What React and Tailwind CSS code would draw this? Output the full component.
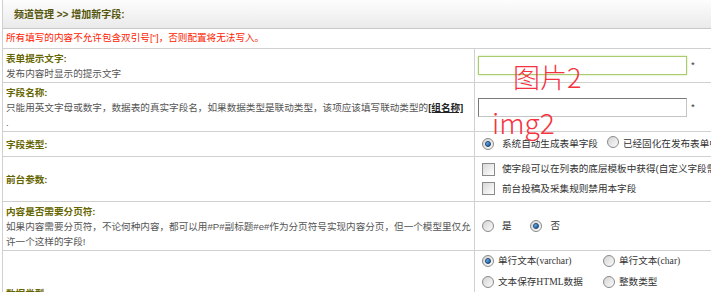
const font = { fontFamily: '"Liberation Sans", "Noto Sans CJK SC", sans-serif' }

function Radio({ checked }) {
  return (
    <span className="inline-flex w-[12px] h-[12px] shrink-0 items-center justify-center rounded-full border border-[#8a8a8a] bg-gradient-to-br from-[#d4d4d4] to-[#fbfbfb]">
      {checked && <span className="w-[6px] h-[6px] rounded-full border border-[#1b3f6e] bg-gradient-to-br from-[#7cc8f5] to-[#0b4f9c]"></span>}
    </span>
  )
}

function Check() {
  return <span className="inline-block w-[13px] h-[13px] shrink-0 border border-[#8a8a8a] bg-gradient-to-br from-[#d8d8d8] to-white"></span>
}

const dataTypes = [
  ['单行文本(varchar)', '单行文本(char)', '多行文本', 'HTML文本'],
  ['文本保存HTML数据', '整数类型', '小数类型', '时间类型'],
  ['图片', '图片(仅网址)', '多媒体文件', '附件类型'],
  ['使用option下拉框', 'radio选项卡', 'checkbox多选框', '联动类型'],
]

function Row({ h, label, desc, children, top }) {
  return (
    <div className="grid grid-cols-[472px_1fr] border-b border-[#d0d0d0]" style={{ height: h }}>
      <div className={`flex flex-col border-r border-[#d0d0d0] pl-[3px] ${top ? 'pt-[2px]' : 'justify-center'}`}>
        <div className="font-bold text-[#666600] leading-[15px]">{label}</div>
        {desc && <div className="whitespace-nowrap text-[#555555] leading-[15px]">{desc}</div>}
      </div>
      <div className="flex flex-col justify-center pl-[7px]">{children}</div>
    </div>
  )
}

export default function App() {
  return (
    <div className="relative w-[711px] h-[292px] overflow-hidden bg-white text-[9.6px]" style={font}>
      <div className="ml-[2px] w-[900px] border-l border-[#d0d0d0]">
        <div className="flex h-[29px] items-center border-b border-[#c8c8c8] bg-gradient-to-b from-[#fdfdfd] to-[#eaeaea] pl-[11px] text-[10px] font-bold text-[#55550c]">
          频道管理 &gt;&gt; 增加新字段:
        </div>
        <div className="flex h-[20px] items-center border-b border-[#d0d0d0] pl-[3px] text-[#ff1a00]">
          所有填写的内容不允许包含双引号["]，否则配置将无法写入。
        </div>

        <Row h={34} label="表单提示文字:" desc="发布内容时显示的提示文字" top>
          <div className="flex items-center">
            <span className="-ml-[4px] h-[19px] w-[209px] border border-[#a9cc6e] bg-white shadow-[0_0_2px_#c8e09a]"></span>
            <span className="ml-[4px] text-[#333]">*</span>
          </div>
        </Row>

        <Row
          h={49}
          label="字段名称:"
          top
          desc={
            <>
              只能用英文字母或数字，数据表的真实字段名，如果数据类型是联动类型，该项应该填写联动类型的<span className="font-bold text-[#222] underline">[组名称]</span>
              <br />.
            </>
          }
        >
          <div className="flex items-center">
            <span className="-ml-[4px] h-[19px] w-[209px] border border-[#c4c4c4] border-l-[#7a7a7a] border-t-[#7a7a7a] bg-white"></span>
            <span className="ml-[4px] text-[#333]">*</span>
          </div>
        </Row>

        <Row h={25} label="字段类型:">
          <div className="flex items-center text-[#333]">
            <Radio checked />
            <span className="ml-[8px]">系统自动生成表单字段</span>
            <span className="ml-[9px]"><Radio /></span>
            <span className="ml-[4px] whitespace-nowrap">已经固化在发布表单中的字段</span>
          </div>
        </Row>

        <Row h={45} label="前台参数:">
          <div className="flex flex-col gap-[5px] text-[#333]">
            <div className="flex items-center">
              <Check />
              <span className="ml-[7px] whitespace-nowrap">使字段可以在列表的底层模板中获得(自定义字段需要)</span>
            </div>
            <div className="flex items-center">
              <Check />
              <span className="ml-[7px]">前台投稿及采集规则禁用本字段</span>
            </div>
          </div>
        </Row>

        <Row
          h={49}
          label="内容是否需要分页符:"
          desc={
            <>
              如果内容需要分页符，不论何种内容，都可以用#P#副标题#e#作为分页符号实现内容分页，但一个模型里仅允
              <br />
              许一个这样的字段!
            </>
          }
        >
          <div className="flex items-center text-[#333]">
            <Radio />
            <span className="ml-[8px]">是</span>
            <span className="ml-[18px]"><Radio checked /></span>
            <span className="ml-[9px]">否</span>
          </div>
        </Row>

        <Row h={84} label="数据类型:">
          <div className="flex flex-col" style={{ fontFamily: '"Liberation Serif", "Noto Sans CJK SC", serif' }}>
            {dataTypes.map((line, i) => (
              <div key={i} className="grid h-[21px] grid-cols-[121px_121px_121px_121px] items-center text-[#333]">
                {line.map((t, j) => (
                  <div key={t} className="flex items-center">
                    <Radio checked={i === 0 && j === 0} />
                    <span className="ml-[4px] whitespace-nowrap">{t}</span>
                  </div>
                ))}
              </div>
            ))}
          </div>
        </Row>
      </div>

      <div className="absolute left-[513px] top-[59px] text-[27px] font-light leading-[36px] text-[#f5333f]" style={{ fontFamily: '"Noto Sans CJK SC", sans-serif' }}>
        图片2
      </div>
      <div className="absolute left-[492px] top-[104px] text-[28px] font-light leading-[36px] text-[#f5333f]" style={{ fontFamily: '"Noto Sans CJK SC", sans-serif' }}>
        img2
      </div>
    </div>
  )
}
